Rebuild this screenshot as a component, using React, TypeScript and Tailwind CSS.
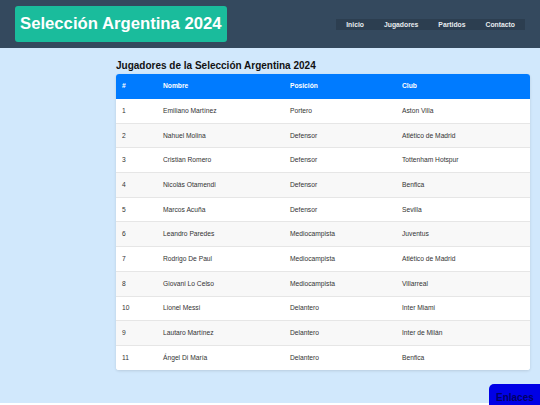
const jugadores = [
  { n: "1", nombre: "Emiliano Martínez", pos: "Portero", club: "Aston Villa" },
  { n: "2", nombre: "Nahuel Molina", pos: "Defensor", club: "Atlético de Madrid" },
  { n: "3", nombre: "Cristian Romero", pos: "Defensor", club: "Tottenham Hotspur" },
  { n: "4", nombre: "Nicolás Otamendi", pos: "Defensor", club: "Benfica" },
  { n: "5", nombre: "Marcos Acuña", pos: "Defensor", club: "Sevilla" },
  { n: "6", nombre: "Leandro Paredes", pos: "Mediocampista", club: "Juventus" },
  { n: "7", nombre: "Rodrigo De Paul", pos: "Mediocampista", club: "Atlético de Madrid" },
  { n: "8", nombre: "Giovani Lo Celso", pos: "Mediocampista", club: "Villarreal" },
  { n: "10", nombre: "Lionel Messi", pos: "Delantero", club: "Inter Miami" },
  { n: "9", nombre: "Lautaro Martínez", pos: "Delantero", club: "Inter de Milán" },
  { n: "11", nombre: "Ángel Di María", pos: "Delantero", club: "Benfica" },
];

const App = () => {
  return (
    <div className="relative w-[540px] h-[405px] overflow-hidden bg-white font-['Liberation_Sans',Arial,sans-serif]">
      <header className="h-[48px] bg-[#34495e] flex items-center justify-between pl-[15px] pr-[15px]">
        <h1 className="h-[36px] px-[5px] flex items-center bg-[#1abc9c] rounded-[3px] text-white font-bold text-[16.7px] leading-none">
          Selección Argentina 2024
        </h1>
        <nav className="flex bg-[#2c3e50] h-[11px] items-center">
          <a href="#" className="px-[10px] text-[#e8ecef] font-bold text-[6.8px] leading-[11px]">Inicio</a>
          <a href="#" className="px-[10px] text-[#e8ecef] font-bold text-[6.8px] leading-[11px]">Jugadores</a>
          <a href="#" className="px-[10px] text-[#e8ecef] font-bold text-[6.8px] leading-[11px]">Partidos</a>
          <a href="#" className="px-[10px] text-[#e8ecef] font-bold text-[6.8px] leading-[11px]">Contacto</a>
        </nav>
      </header>

      <main className="h-[355px] bg-[#d1e8fc] pt-[12px] pl-[116px] pr-[10px]">
        <h2 className="text-[10px] leading-[12px] font-bold text-[#111]">
          Jugadores de la Selección Argentina 2024
        </h2>
        <div className="mt-[2px] w-[414px] bg-white rounded-[3px] overflow-hidden shadow-[0_1px_3px_rgba(0,0,0,0.12)]">
          <table className="w-full table-fixed border-collapse text-[6.7px] text-[#333]">
            <colgroup>
              <col className="w-[41px]" />
              <col className="w-[127px]" />
              <col className="w-[112px]" />
              <col className="w-[134px]" />
            </colgroup>
            <thead>
              <tr className="h-[24.5px] bg-[#007bff] text-white font-bold">
                <th className="text-left pl-[6px] font-bold">#</th>
                <th className="text-left pl-[6px] font-bold">Nombre</th>
                <th className="text-left pl-[6px] font-bold">Posición</th>
                <th className="text-left pl-[6px] font-bold">Club</th>
              </tr>
            </thead>
            <tbody>
              {jugadores.map((j, i) => (
                <tr
                  key={j.n}
                  className={`h-[24.7px] border-b border-[#e6e6e6] last:border-b-0 ${i % 2 === 1 ? "bg-[#f8f8f8]" : "bg-white"}`}
                >
                  <td className="pl-[6px]">{j.n}</td>
                  <td className="pl-[6px]">{j.nombre}</td>
                  <td className="pl-[6px]">{j.pos}</td>
                  <td className="pl-[6px]">{j.club}</td>
                </tr>
              ))}
            </tbody>
          </table>
        </div>
      </main>

      <aside className="absolute left-[489px] top-[384px] w-[60px] h-[30px] bg-[#0000e6] rounded-tl-[5px] pl-[7px] pt-[8px]">
        <span className="block text-[10px] leading-[12px] font-bold text-[#000066]">Enlaces</span>
      </aside>
    </div>
  );
};

export default App;
